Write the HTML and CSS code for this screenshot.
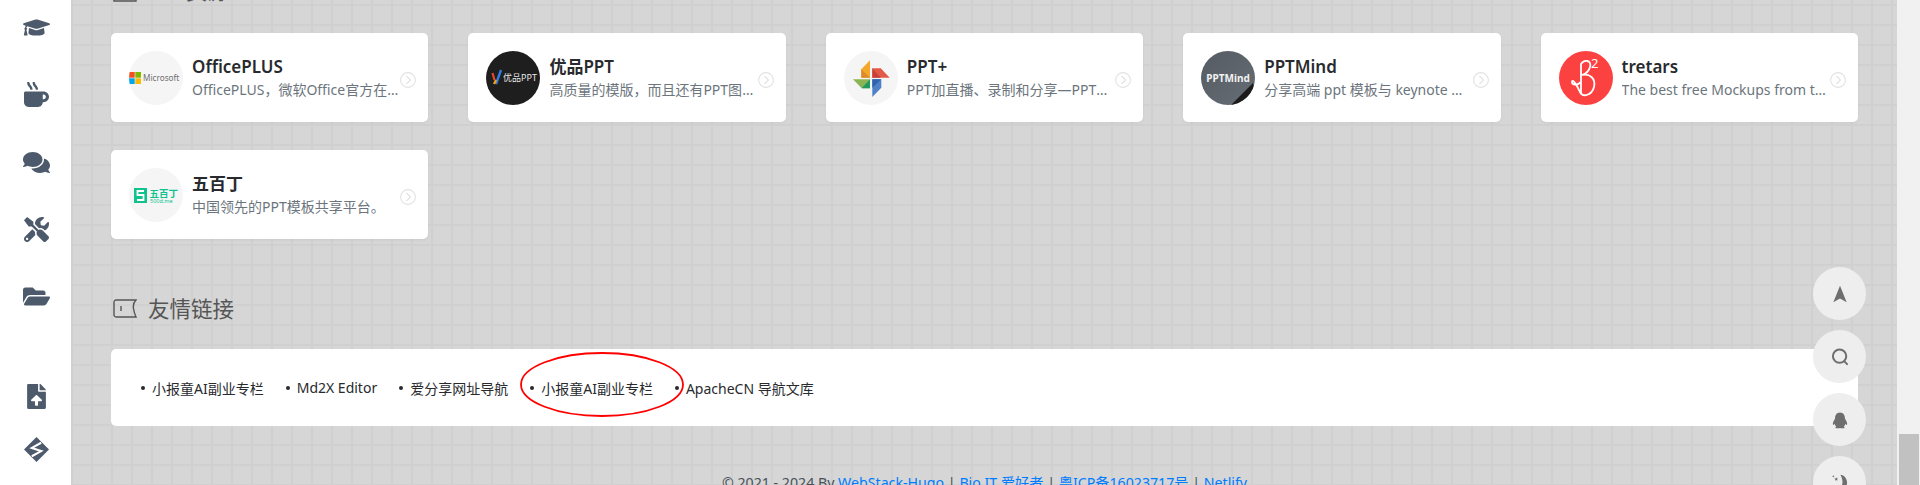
FILE: index.html
```html
<!DOCTYPE html>
<html lang="zh-CN">
<head>
<meta charset="utf-8">
<title>WebStack</title>
<link rel="stylesheet" href="styles.css">
</head>
<body>
<div class="shell">
  <aside class="sidebar">
    <nav class="nav-group">
      <svg class="nav-icon" viewBox="0 0 640 512"><path d="M622.34 153.2L343.4 67.5c-15.2-4.67-31.6-4.67-46.79 0L17.66 153.2c-23.54 7.23-23.54 38.36 0 45.59l48.63 14.94c-10.67 13.19-17.23 29.28-17.88 46.9C38.78 266.15 32 276.11 32 288c0 10.78 5.68 19.85 13.86 25.65L20.33 428.53C18.11 438.52 25.71 448 35.94 448h56.11c10.24 0 17.84-9.48 15.62-19.47L82.14 313.65C90.32 307.85 96 298.78 96 288c0-11.57-6.47-21.25-15.66-26.87.76-15.02 8.44-28.3 20.69-36.72L296.6 284.5c9.06 2.78 26.44 6.25 46.79 0l278.95-85.7c23.55-7.24 23.55-38.36 0-45.6zM352.79 315.09c-28.53 8.76-52.84 3.92-65.59 0l-145.02-44.55L128 384c0 35.35 85.96 64 192 64s192-28.65 192-64l-14.18-113.47-145.03 44.56z"/></svg>
      <svg class="nav-icon" viewBox="0 0 512 512"><path d="M127.1 146.5c1.3 7.7 8 13.5 16 13.5h16.5c9.8 0 17.6-8.5 16.3-18-3.8-28.2-16.4-54.2-36.6-74.7-14.4-14.7-23.6-33.3-26.4-53.5C111.8 5.9 105 0 96.8 0H80.4C70.6 0 63 8.5 64.1 18c3.9 31.9 18 61.3 40.6 84.4 12 12.2 19.7 27.5 22.4 44.1zm112 0c1.3 7.7 8 13.5 16 13.5h16.5c9.8 0 17.6-8.5 16.3-18-3.8-28.2-16.4-54.2-36.6-74.7-14.4-14.7-23.6-33.3-26.4-53.5C223.8 5.9 217 0 208.8 0h-16.4c-9.8 0-17.5 8.5-16.3 18 3.9 31.9 18 61.3 40.6 84.4 12 12.2 19.7 27.5 22.4 44.1zM400 192H32c-17.7 0-32 14.3-32 32v192c0 53 43 96 96 96h192c53 0 96-43 96-96h16c61.8 0 112-50.2 112-112s-50.2-112-112-112zm0 160h-16v-96h16c26.5 0 48 21.5 48 48s-21.5 48-48 48z"/></svg>
      <svg class="nav-icon" viewBox="0 0 576 512"><path d="M416 192c0-88.4-93.1-160-208-160S0 103.6 0 192c0 34.3 14.1 65.9 38 92-13.4 30.2-35.5 54.2-35.8 54.5-2.2 2.3-2.8 5.7-1.5 8.7S4.8 352 8 352c36.6 0 66.9-12.3 88.7-25 32.2 15.7 70.3 25 111.3 25 114.9 0 208-71.6 208-160zm122 220c23.9-26 38-57.7 38-92 0-66.9-53.5-124.2-129.3-148.1.9 6.6 1.3 13.3 1.3 20.1 0 105.9-107.7 192-240 192-10.8 0-21.3-.8-31.7-1.9C207.8 439.6 281.8 480 368 480c41 0 79.1-9.2 111.3-25 21.8 12.7 52.1 25 88.7 25 3.2 0 6.1-1.9 7.3-4.8 1.3-2.9.7-6.3-1.5-8.7-.3-.3-22.4-24.2-35.8-54.5z"/></svg>
      <svg class="nav-icon" viewBox="0 0 512 512"><path d="M501.1 395.7L384 278.6c-23.1-23.1-57.6-27.6-85.4-13.9L192 158.1V96L64 0 0 64l96 128h62.1l106.6 106.6c-13.6 27.8-9.2 62.3 13.9 85.4l117.1 117.1c14.6 14.6 38.2 14.6 52.7 0l52.7-52.7c14.5-14.6 14.5-38.2 0-52.7zM331.7 225c28.3 0 54.9 11 74.9 31l19.4 19.4c15.8-6.9 30.8-16.5 43.8-29.5 37.1-37.1 49.7-89.3 37.9-136.7-2.2-9-13.5-12.1-20.1-5.5l-74.4 74.4-67.9-11.3L334 98.9l74.4-74.4c6.6-6.6 3.4-17.9-5.7-20.2-47.4-11.7-99.6.9-136.6 37.9-28.5 28.5-41.9 66.1-41.2 103.6l82.1 82.1c8.1-1.9 16.5-2.9 24.7-2.9zm-103.9 82l-56.7-56.7L18.7 402.8c-25 25-25 65.5 0 90.5s65.5 25 90.5 0l123.6-123.6c-7.6-19.9-9.9-41.6-5-62.7zM64 472c-13.2 0-24-10.8-24-24 0-13.3 10.7-24 24-24s24 10.7 24 24c0 13.2-10.7 24-24 24z"/></svg>
      <svg class="nav-icon" viewBox="0 0 576 512"><path d="M572.694 292.093L500.27 416.248A63.997 63.997 0 0 1 444.989 448H45.025c-18.523 0-30.064-20.093-20.731-36.093l72.424-124.155A64 64 0 0 1 152 256h399.964c18.523 0 30.064 20.093 20.73 36.093zM152 224h328v-48c0-26.51-21.49-48-48-48H272l-64-64H48C21.49 64 0 85.49 0 112v278.046l69.077-118.418C86.214 242.25 117.989 224 152 224z"/></svg>
    </nav>
    <nav class="nav-group nav-group-lower">
      <svg class="nav-icon" viewBox="0 0 384 512"><path d="M224 136V0H24C10.7 0 0 10.7 0 24v464c0 13.3 10.7 24 24 24h336c13.3 0 24-10.7 24-24V160H248c-13.2 0-24-10.8-24-24zm65.18 215.97H224v80c0 8.84-7.16 16-16 16h-32c-8.84 0-16-7.16-16-16v-80H94.82c-14.28 0-21.41-17.29-11.27-27.36l96.42-95.7c6.65-6.61 17.39-6.61 24.04 0l96.42 95.7c10.15 10.07 3.03 27.36-11.25 27.36zM377 105L279.1 7c-4.5-4.5-10.6-7-17-7H256v128h128v-6.1c0-6.3-2.5-12.4-7-16.9z"/></svg>
      <svg class="nav-icon" viewBox="0 0 24 24"><path d="M12 0L24 12 12 24 0 12z"/><path class="s-cut" d="M16.500 5.500L7.500 10.500 16.500 13.500 7.500 18.500"/></svg>
    </nav>
  </aside>

  <main class="content">
    <div class="scroller">
      <section class="section">
        <h4 class="heading heading-top">
          <svg class="heading-icon" viewBox="0 0 24 19"><path d="M1 1h22v17H1z"/></svg>
          <span>PPT资源</span>
        </h4>
        <div class="card-grid">
          <a class="card">
            <span class="avatar">
              <svg viewBox="0 0 54 54">
                <rect x="0" y="21" width="5.700" height="5.700" fill="#f25022"/>
                <rect x="6.300" y="21" width="5.700" height="5.700" fill="#7fba00"/>
                <rect x="0" y="27.300" width="5.700" height="5.700" fill="#00a4ef"/>
                <rect x="6.300" y="27.300" width="5.700" height="5.700" fill="#ffb900"/>
                <text class="logo-ms" x="14" y="30">Microsoft</text>
              </svg>
            </span>
            <span class="card-text"><strong class="card-title">OfficePLUS</strong><span class="card-desc">OfficePLUS，微软Office官方在线模板网站</span></span>
            <svg class="card-arrow" viewBox="0 0 16 16"><circle cx="8" cy="8" r="7.400"/><path d="M6.500 4l4 4-4 4"/></svg>
          </a>
          <a class="card">
            <span class="avatar avatar-black">
              <svg viewBox="0 0 54 54">
                <path d="M6.500 22l2 7" stroke="#e8452c" stroke-width="2.200" fill="none"/>
                <path d="M10 33l5-14" stroke="#2f7de1" stroke-width="2.400" fill="none"/>
                <path d="M8 33l2-4" stroke="#f2a21c" stroke-width="2.200" fill="none"/>
                <text class="logo-yp" x="17" y="30">优品PPT</text>
              </svg>
            </span>
            <span class="card-text"><strong class="card-title">优品PPT</strong><span class="card-desc">高质量的模版，而且还有PPT图表、PPT背景图等资源</span></span>
            <svg class="card-arrow" viewBox="0 0 16 16"><circle cx="8" cy="8" r="7.400"/><path d="M6.500 4l4 4-4 4"/></svg>
          </a>
          <a class="card">
            <span class="avatar">
              <svg viewBox="0 0 54 54">
                <path d="M26 9.300V26.700H17.300V18.300z" fill="#f3a829"/>
                <path d="M17.300 26.700V18.300L26 26.700z" fill="#dd8a2c"/>
                <path d="M28.300 17.300H36.700L45.700 26.700H28.300z" fill="#e25a47"/>
                <path d="M28.300 17.300L36.700 26.700H28.300z" fill="#c9403a"/>
                <path d="M9 28.300H26V37.300H17.700z" fill="#8cb455"/>
                <path d="M26 28.300V37.300H17.700z" fill="#1f9a61"/>
                <path d="M28.300 28.300H37.300V36.700L28.300 46z" fill="#4f80c8"/>
                <path d="M28.300 28.300H37.300L28.300 36.700z" fill="#2f63ad"/>
              </svg>
            </span>
            <span class="card-text"><strong class="card-title">PPT+</strong><span class="card-desc">PPT加直播、录制和分享—PPT控们的新玩法和好工具</span></span>
            <svg class="card-arrow" viewBox="0 0 16 16"><circle cx="8" cy="8" r="7.400"/><path d="M6.500 4l4 4-4 4"/></svg>
          </a>
          <a class="card">
            <span class="avatar avatar-mind">
              <svg viewBox="0 0 54 54">
                <path d="M52 32L30 54h10L54 40z" fill="#1c1c1c"/>
                <text class="logo-mind" x="27" y="30.500">PPTMind</text>
              </svg>
            </span>
            <span class="card-text"><strong class="card-title">PPTMind</strong><span class="card-desc">分享高端 ppt 模板与 keynote 模板的数字作品交易平台</span></span>
            <svg class="card-arrow" viewBox="0 0 16 16"><circle cx="8" cy="8" r="7.400"/><path d="M6.500 4l4 4-4 4"/></svg>
          </a>
          <a class="card">
            <span class="avatar avatar-red">
              <svg viewBox="0 0 54 54">
                <path class="logo-b" d="M22 42V13C25 8 33 9 31 16 30 20 26 23 23 24 31 22 37 28 35 36 33 44 24 47 21 41 18 34 13 27 13 31 13 35 19 34 22 31"/>
                <text class="logo-two" x="32" y="17">2</text>
              </svg>
            </span>
            <span class="card-text"><strong class="card-title">tretars</strong><span class="card-desc">The best free Mockups from the Best Designers</span></span>
            <svg class="card-arrow" viewBox="0 0 16 16"><circle cx="8" cy="8" r="7.400"/><path d="M6.500 4l4 4-4 4"/></svg>
          </a>
          <a class="card">
            <span class="avatar">
              <svg viewBox="0 0 54 54">
                <rect x="5" y="20" width="13" height="15" fill="#11c28f"/>
                <path d="M15 23H8.500V27H14.500V32H8" fill="none" stroke="#fff" stroke-width="1.800"/>
                <text class="logo-wbd" x="20.500" y="28.500">五百丁</text>
                <text class="logo-wbd-sub" x="21" y="34.500">500d.me</text>
              </svg>
            </span>
            <span class="card-text"><strong class="card-title">五百丁</strong><span class="card-desc">中国领先的PPT模板共享平台。</span></span>
            <svg class="card-arrow" viewBox="0 0 16 16"><circle cx="8" cy="8" r="7.400"/><path d="M6.500 4l4 4-4 4"/></svg>
          </a>
        </div>
      </section>

      <section class="section">
        <h4 class="heading">
          <svg class="heading-icon" viewBox="0 0 24 19"><path d="M3 1H23C20 4 20 6.500 20.500 9.500 21 12.500 21.500 15 23 18H3C2 18 1 17 1 16V3C1 2 2 1 3 1zM8 7V12"/></svg>
          <span>友情链接</span>
        </h4>
        <div class="link-panel">
          <ul class="link-list">
            <li class="link-item">小报童AI副业专栏</li>
            <li class="link-item">Md2X Editor</li>
            <li class="link-item">爱分享网址导航</li>
            <li class="link-item">小报童AI副业专栏</li>
            <li class="link-item">ApacheCN 导航文库</li>
          </ul>
          <svg class="annotation" viewBox="0 0 164 65"><ellipse cx="82" cy="32.500" rx="81" ry="31.500"/></svg>
        </div>
      </section>

      <footer class="footer">© 2021 - 2024 By <a>WebStack-Hugo</a> | <a>Bio IT 爱好者</a> | <a>粤ICP备16023717号</a> | <a>Netlify</a></footer>
    </div>

    <div class="float-tools">
      <span class="float-btn"><svg viewBox="0 0 24 24"><path d="M12 2L20 22 12 17.500 4 22z"/></svg></span>
      <span class="float-btn"><svg viewBox="0 0 24 24"><circle cx="11.500" cy="11" r="8" class="line"/><path d="M17 17l3.500 3.500" class="line"/></svg></span>
      <span class="float-btn"><svg viewBox="0 0 24 24"><path d="M12 3C16 3 18 6.500 18 10.500 19.500 13 21 15.500 20.500 17.500 20 18.500 19 17.500 18.500 16.500 18.200 18 17.500 19 16.500 20 18 20.500 18 22 16 22H14C13 22 12.500 21.600 12 21.600 11.500 21.600 11 22 10 22H8C6 22 6 20.500 7.500 20 6.500 19 5.800 18 5.500 16.500 5 17.500 4 18.500 3.500 17.500 3 15.500 4.500 13 6 10.500 6 6.500 8 3 12 3z"/></svg></span>
      <span class="float-btn"><svg viewBox="0 0 24 24"><path d="M12.500 2C17 2.500 20.500 6.500 20.500 11.500 20.500 17 16 21.500 10.500 21.500 9 21.500 7.500 21 6.500 20.500 11 20 15 16 15 11 15 7.500 14 4.500 12.500 2z"/><path d="M7.500 5l.7 1.500 1.500.2-1.100 1 .3 1.600-1.400-.8-1.400.8.300-1.600-1.100-1 1.500-.2zM4 2.500l.5 1 1 .5-1 .5-.5 1-.5-1-1-.5 1-.5z"/></svg></span>
    </div>
  </main>

  <div class="scrollbar"><div class="scroll-thumb"></div></div>
</div>
</body>
</html>
```

FILE: styles.css
```css
* { box-sizing: border-box; }

html, body {
  margin: 0;
  height: 485px;
  overflow: hidden;
}

body {
  font-family: "Noto Sans", "Noto Sans CJK SC", sans-serif;
  color: #282a2d;
}

.shell {
  display: flex;
  height: 485px;
  overflow: hidden;
}

.sidebar {
  flex: 0 0 71px;
  background: #fff;
  padding-top: 15px;
}

.nav-group {
  display: flex;
  flex-direction: column;
  align-items: center;
  gap: 42.25px;
  padding-left: 2px;
}

.nav-group-lower {
  margin-top: 75px;
  gap: 28px;
}

.nav-icon {
  width: 27px;
  height: 25px;
  fill: #4d5a6b;
  display: block;
}

.s-cut {
  fill: none;
  stroke: #fff;
  stroke-width: 2;
}

.content {
  position: relative;
  flex: 1 1 auto;
  min-width: 0;
  overflow: hidden;
  background-color: #d6d6d6;
  background-image:
    linear-gradient(to right, #d0d0d0 0 2px, transparent 2px),
    linear-gradient(to bottom, #d0d0d0 0 2px, transparent 2px);
  background-size: 20px 20px;
  background-position: 20px 4px;
}

.scroller {
  margin-top: -24px;
  padding: 0 39px 0 40px;
}

.section {
  margin-bottom: 55px;
}

.section:last-of-type {
  margin-bottom: 47px;
}

.heading {
  display: flex;
  align-items: center;
  gap: 11px;
  height: 30px;
  margin: 0 0 25px;
  padding: 0 0 4px 2px;
  font-size: 21.500px;
  font-weight: 400;
  color: #555;
}

.heading-top {
  margin-bottom: 27px;
}

.heading-icon {
  width: 24px;
  height: 19px;
  margin-top: 2px;
  fill: none;
  stroke: #555;
  stroke-width: 1.4;
}

.heading-top .heading-icon {
  margin-top: 6px;
}

.card-grid {
  display: grid;
  grid-template-columns: repeat(5, minmax(0, 1fr));
  gap: 28px 40px;
}

.card {
  position: relative;
  display: flex;
  align-items: center;
  gap: 9px;
  height: 89px;
  padding: 0 25px 0 18px;
  background: #fff;
  border-radius: 5px;
  box-shadow: 0 1px 3px rgba(0, 0, 0, 0.05);
}

.avatar {
  flex: 0 0 54px;
  width: 54px;
  height: 54px;
  border-radius: 50%;
  background: #f5f5f5;
  overflow: hidden;
}

.avatar svg {
  display: block;
  width: 54px;
  height: 54px;
}

.avatar-black { background: #1e1e1e; }
.avatar-red { background: #fc4141; }
.avatar-mind { background: linear-gradient(135deg, #545b62, #666d74); }

.logo-ms { font-size: 8.200px; fill: #6f6f6f; }
.logo-yp { font-size: 9px; fill: #e6e6e6; }
.logo-mind { font-size: 10px; font-weight: 700; fill: #f2f2f2; text-anchor: middle; }
.logo-b { fill: none; stroke: #fff; stroke-width: 1.8; stroke-linecap: round; }
.logo-two { font-size: 13px; fill: #fff; }
.logo-wbd { font-size: 9.5px; font-weight: 700; fill: #11c28f; }
.logo-wbd-sub { font-size: 5.5px; fill: #11c28f; }

.card-text {
  display: flex;
  flex-direction: column;
  flex: 1 1 auto;
  min-width: 0;
}

.card-title {
  font-size: 17px;
  font-weight: 600;
  line-height: 24px;
  color: #282a2d;
  white-space: nowrap;
}

.card-desc {
  font-size: 14px;
  line-height: 22px;
  color: #6c757d;
  white-space: nowrap;
  overflow: hidden;
  text-overflow: ellipsis;
}

.card-arrow {
  position: absolute;
  right: 12px;
  top: 39px;
  width: 16px;
  height: 16px;
  fill: none;
  stroke: #e2e2e2;
  stroke-width: 1.1;
}

.link-panel {
  position: relative;
  display: flex;
  align-items: center;
  height: 77px;
  padding-left: 30px;
  background: #fff;
  border-radius: 5px;
}

.link-list {
  display: flex;
  gap: 22px;
  margin: 0;
  padding: 0;
  list-style: none;
  font-size: 14px;
}

.link-item {
  display: flex;
  align-items: center;
  gap: 7px;
  white-space: nowrap;
}

.link-item::before {
  content: "";
  width: 4px;
  height: 4px;
  border-radius: 50%;
  background: #282a2d;
}

.annotation {
  position: absolute;
  left: 409px;
  top: 3px;
  width: 164px;
  height: 65px;
  fill: none;
  stroke: #f00;
  stroke-width: 1.8;
}

.footer {
  text-align: center;
  font-size: 14.200px;
  line-height: 20px;
  color: #495057;
}

.footer a { color: #007bff; }

.float-tools {
  position: absolute;
  top: 267px;
  left: 1742px;
  display: flex;
  flex-direction: column;
  gap: 10px;
}

.float-btn {
  display: flex;
  align-items: center;
  justify-content: center;
  width: 53px;
  height: 53px;
  border-radius: 50%;
  background: #eee;
}

.float-btn svg {
  width: 20px;
  height: 20px;
  fill: #6e6e6e;
}

.float-btn .line {
  fill: none;
  stroke: #6e6e6e;
  stroke-width: 2.4;
  stroke-linecap: round;
}

.scrollbar {
  position: relative;
  flex: 0 0 23px;
  background: #f1f1f1;
}

.scroll-thumb {
  position: absolute;
  left: 2px;
  right: 1px;
  top: 434px;
  bottom: 0;
  background: #c1c1c1;
}
```
